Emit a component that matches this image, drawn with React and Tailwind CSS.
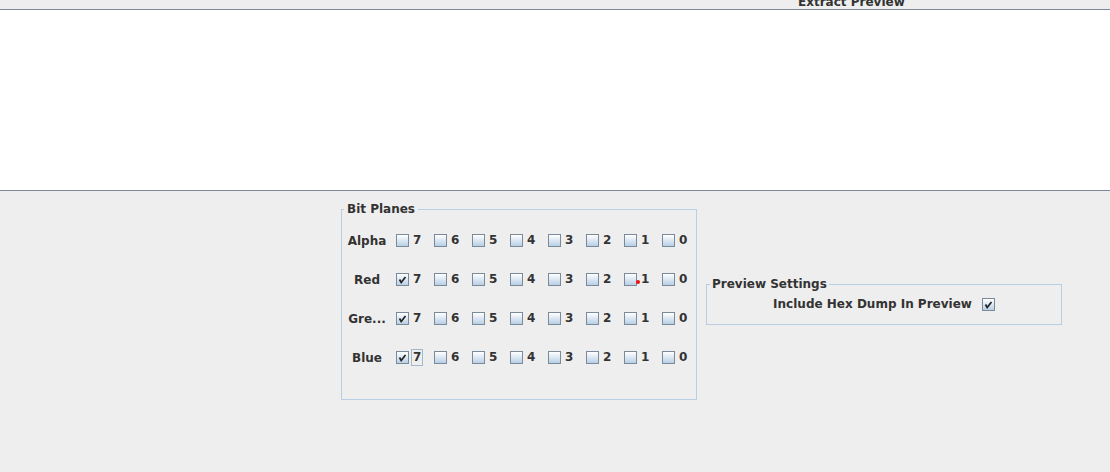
const font = { fontFamily: '"DejaVu Sans", "Liberation Sans", sans-serif' }

function Box({ checked }) {
  return (
    <span className="w-[13px] h-[13px] shrink-0 border border-[#7a8a99] bg-linear-to-b from-white to-[#b8cfe5] flex items-center justify-center">
      {checked && (
        <svg width="11" height="11" viewBox="0 0 11 11">
          <path d="M2.5 5.5 L4.2 8.5 L8.5 3" fill="none" stroke="#222" strokeWidth="1.7" />
        </svg>
      )}
    </span>
  )
}

const rows = [
  { label: 'Alpha', checked: [] },
  { label: 'Red', checked: [7] },
  { label: 'Gre...', checked: [7] },
  { label: 'Blue', checked: [7], focus: 7 },
]

const bits = [7, 6, 5, 4, 3, 2, 1, 0]

export default function App() {
  return (
    <div className="w-[1110px] h-[472px] bg-[#eeeeee] text-[#333333] text-[12px] font-bold flex flex-col overflow-hidden" style={font}>
      <div className="h-[9px] overflow-hidden">
        <div className="mt-[-5px] leading-[15px] pl-[798px]">Extract Preview</div>
      </div>
      <div className="h-[181px] bg-white border-t border-[#7a8a99]" />
      <div className="border-t border-[#7a8a99] flex-1 flex items-center pl-[341px] pb-[61px] gap-[9px]">
        <fieldset className="w-[356px] min-w-0 border border-[#b8cfe5] pl-[4px] pt-[4px] pb-[22px]">
          <legend className="ml-[-2px] px-[3px] leading-[15px]">Bit Planes</legend>
          {rows.map((r) => (
            <div key={r.label} className="h-[39px] flex items-center">
              <div className="w-[42px] text-center">{r.label}</div>
              <div className="flex ml-[8px]">
                {bits.map((b) => (
                  <div key={b} className="w-[38px] last:w-[34px] flex items-center">
                    <Box checked={r.checked.includes(b)} />
                    <span
                      className={
                        r.focus === b
                          ? 'ml-[2px] px-[1px] border border-[#a3b8cc] leading-[15px] relative'
                          : 'ml-[3px] border border-transparent leading-[15px] relative'
                      }
                    >
                      {b}
                      {r.label === 'Red' && b === 1 && (
                        <span className="absolute left-[-5px] top-[8px] w-[4px] h-[4px] rounded-full bg-[#ee1111]" />
                      )}
                    </span>
                  </div>
                ))}
              </div>
            </div>
          ))}
        </fieldset>
        <fieldset className="w-[356px] min-w-0 border border-[#b8cfe5] pt-[5px] pb-[12px]">
          <legend className="ml-[3px] px-[2px] leading-[15px]">Preview Settings</legend>
          <div className="flex items-center justify-center gap-[10px] h-[15px]">
            <span className="leading-[15px]">Include Hex Dump In Preview</span>
            <Box checked />
          </div>
        </fieldset>
      </div>
    </div>
  )
}
